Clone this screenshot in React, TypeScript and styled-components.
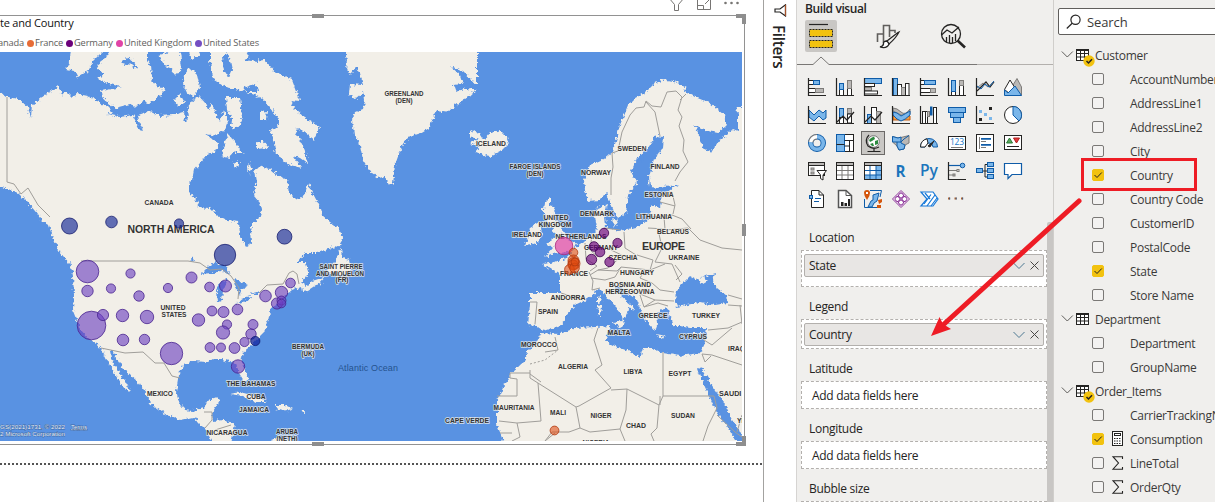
import React from 'react';
import styled, { createGlobalStyle } from 'styled-components';

const Global = createGlobalStyle`
  * { box-sizing: border-box; }
  body { margin: 0; background: #fff; overflow: hidden; font-family: "Open Sans", "Noto Sans", sans-serif; font-size: 12px; color: #252423; }
`;

const Page = styled.div`
  position: relative;
  display: flex;
  width: 1215px;
  height: 502px;
  overflow: hidden;
`;

/* ---------- report canvas ---------- */
const Canvas = styled.main`
  flex: none;
  display: flex;
  flex-direction: column;
  width: 764px;
  height: 502px;
  border-right: 1px solid #a3a2a0;
  background: #fff;
`;
const VisualHeader = styled.div`
  display: flex;
  justify-content: flex-end;
  height: 15px;
  padding-right: 20px;
  overflow: hidden;
`;
const VisualFrame = styled.section`
  position: relative;
  width: 745px;
  height: 430px;
  border: 1px solid #929292;
  border-left: 0;
`;
const VisualTitle = styled.div`
  height: 20px;
  font-size: 11px;
  line-height: 13px;
  letter-spacing: -0.2px;
  color: #111;
  white-space: nowrap;
`;
const LegendRow = styled.div`
  display: flex;
  align-items: center;
  height: 16px;
  margin-left: -2px;
  padding-bottom: 2px;
  font-size: 9.3px;
  line-height: 14px;
  color: #605e5c;
  white-space: nowrap;
`;
const LegendItem = styled.span<{ $w: number }>`
  display: flex;
  align-items: center;
  gap: 1px;
  width: ${p => p.$w}px;
  letter-spacing: -0.16px;
`;
const Dot = styled.i<{ $c: string }>`
  flex: none;
  width: 7px;
  height: 7px;
  border-radius: 50%;
  background: ${p => p.$c};
`;
const Handle = styled.i<{ $x: number; $y: number; $w: number; $h: number }>`
  position: absolute;
  left: ${p => p.$x}px;
  top: ${p => p.$y}px;
  width: ${p => p.$w}px;
  height: ${p => p.$h}px;
  background: #8e8e8e;
`;
const PageEdge = styled.div`
  width: 762px;
  height: 2px;
  margin-top: 18px;
  background: repeating-linear-gradient(90deg, #555 0 2px, #fff 2px 4px);
`;
const MapSvg = styled.svg`
  display: block;
  width: 742px;
  height: 389px;
`;

/* ---------- filters strip ---------- */
const FiltersStrip = styled.aside`
  flex: none;
  display: flex;
  flex-direction: column;
  align-items: center;
  width: 33px;
  padding-top: 4px;
  background: #fff;
  border-right: 1px solid #d6d4d2;
`;
const VerticalTitle = styled.span`
  writing-mode: vertical-rl;
  margin-top: 8px;
  margin-right: 2px;
  font-size: 15.3px;
  font-weight: 600;
  line-height: 18px;
  letter-spacing: -0.3px;
`;

/* ---------- build pane ---------- */
const BuildPane = styled.aside`
  flex: none;
  width: 256px;
  height: 502px;
  background: #f0efed;
  display: flex;
  flex-direction: column;
`;
const PaneTitle = styled.h2`
  margin: 0;
  height: 20px;
  padding-left: 8px;
  font-size: 12px;
  font-weight: 600;
  line-height: 18px;
  letter-spacing: -0.4px;
`;
const Tabs = styled.div`
  display: flex;
  gap: 34px;
  height: 32px;
  padding-left: 8px;
`;
const Tab = styled.div<{ $on?: boolean }>`
  width: 32px;
  height: 32px;
  border-radius: 2px;
  background: ${p => (p.$on ? '#c9c7c4' : 'transparent')};
`;
const TabLine = styled.svg`
  display: block;
  width: 256px;
  height: 17px;
`;
const Gallery = styled.div`
  display: grid;
  grid-template-columns: repeat(8, 24px);
  grid-auto-rows: 24px;
  gap: 4px;
  padding: 6px 0 0 8px;
  height: 147px;
`;
const Cell = styled.div<{ $on?: boolean }>`
  width: 24px;
  height: 24px;
  background: ${p => (p.$on ? '#c9c7c4' : 'transparent')};
  box-shadow: ${p => (p.$on ? 'inset 0 0 0 1px #6b6967' : 'none')};
  svg { display: block; }
`;
const WellsArea = styled.div`
  display: flex;
  flex: 1;
  justify-content: space-between;
  padding-top: 6px;
  overflow: hidden;
`;
const Wells = styled.div`
  width: 250px;
`;
const Scrollbar = styled.div`
  width: 6px;
  background: #c8c6c4;
  border-radius: 2px 2px 0 0;
`;
const WellLabel = styled.div<{ $h: number }>`
  height: ${p => p.$h}px;
  padding: 0 0 3px 12px;
  display: flex;
  align-items: flex-end;
  line-height: 18px;
  letter-spacing: -0.3px;
`;
const WellBox = styled.div<{ $h: number }>`
  height: ${p => p.$h}px;
  width: 246px;
  margin-left: 4px;
  padding: 3px 2px;
  border: 1px dashed #b3b0ad;
  background: #fff;
`;
const Placeholder = styled.div`
  padding-left: 8px;
  line-height: 22px;
  letter-spacing: -0.3px;
`;
const Pill = styled.div`
  display: flex;
  align-items: center;
  height: 23px;
  padding: 0 4px;
  border: 1px solid #b3b0ad;
  border-radius: 2px;
  background: #e8e6e4;
  letter-spacing: -0.3px;
  svg { margin-left: auto; }
`;

/* ---------- fields pane ---------- */
const FieldsPane = styled.aside`
  flex: none;
  width: 162px;
  height: 502px;
  padding-top: 8px;
  border-left: 1px solid #d0cecb;
  background: #f0efed;
  overflow: hidden;
`;
const SearchBox = styled.div`
  display: flex;
  align-items: center;
  gap: 5px;
  width: 170px;
  height: 27px;
  margin-left: 4px;
  padding-left: 7px;
  border: 1px solid #605e5c;
  border-radius: 2px;
  background: #fff;
  font-size: 13px;
  letter-spacing: -0.1px;
  color: #3b3a39;
`;
const Tree = styled.div`
  display: flex;
  flex-direction: column;
  padding-top: 8px;
`;
const TableRow = styled.div`
  display: flex;
  align-items: center;
  height: 24px;
  padding-left: 7px;
  color: #3b3a39;
  letter-spacing: -0.3px;
  white-space: nowrap;
`;
const FieldRow = styled.div`
  display: flex;
  align-items: center;
  height: 24px;
  padding-left: 38px;
  color: #3b3a39;
  letter-spacing: -0.28px;
  white-space: nowrap;
`;
const Check = styled.span<{ $on?: boolean }>`
  flex: none;
  display: flex;
  width: 12px;
  height: 12px;
  border: 1px solid ${p => (p.$on ? '#f2c20f' : '#7a7876')};
  border-radius: 2px;
  background: ${p => (p.$on ? '#f2c20f' : '#f3f2f1')};
`;
const IconSlot = styled.span`
  flex: none;
  display: flex;
  width: 26px;
  padding-left: 7px;
`;

const Overlay = styled.svg`
  position: absolute;
  inset: 0;
  pointer-events: none;
`;

/* ---------- map data ---------- */
const LAND: string[] = [
  // North America
  '-6,92 0,92 7,97 18,99 28,107 31,118 32,105 45,95 52,91 58,86 63,97 66,91 72,97 78,94 88,96 100,102 108,107 113,112 107,114 120,117 133,115 135,118 137,125 141,131 138,115 147,112 153,113 160,116 173,115 184,112 185,121 188,118 187,108 193,100 199,96 206,104 209,111 212,103 215,112 220,122 224,110 228,120 224,130 219,133 213,137 206,134 213,140 219,143 215,152 207,154 200,163 194,170 192,180 189,183 189,193 195,198 199,207 210,208 218,216 228,221 239,222 240,236 246,247 252,243 251,230 253,223 259,219 262,210 260,203 254,196 255,188 257,182 255,170 262,166 270,169 277,175 287,179 289,193 296,200 304,196 308,184 312,192 318,203 322,215 330,222 337,227 343,236 340,246 328,249 318,253 305,253 297,262 306,262 308,274 301,282 307,286 312,281 325,277 320,283 308,291 303,292 302,286 292,290 285,296 280,303 271,308 268,322 264,332 258,338 252,345 243,352 241,362 246,372 248,380 244,382 239,374 236,364 229,361 222,359 213,359 208,362 192,361 183,366 179,374 176,392 179,402 185,410 193,411 203,408 208,400 217,397 220,400 215,408 212,413 213,421 224,420 235,424 233,434 231,446 214,446 206,430 199,423 194,417 180,420 165,414 150,403 147,394 138,382 124,370 118,360 113,352 110,352 112,361 118,370 124,380 130,391 123,387 114,373 108,362 102,350 96,343 88,338 80,329 77,320 73,310 74,295 73,275 70,261 59,250 54,240 49,225 42,221 36,212 27,202 18,193 8,189 -6,185',
  '71,48 70,60 66,69 75,71 78,77 88,71 92,62 101,53 109,48',
  '110,48 106,58 97,65 99,70 104,74 97,79 110,84 122,87 101,91 102,97 115,108 130,104 137,107 143,101 150,104 157,98 165,90 157,86 152,80 151,65 147,60 147,48',
  '158,55 166,53 174,48 180,52 182,68 176,76 170,68 165,66',
  '184,75 190,68 197,75 200,88 193,97 187,93 183,84',
  '174,100 180,94 185,103 178,107',
  '188,48 192,60 200,54 197,48',
  '210,48 210,60 212,78 226,87 240,90 255,95 262,98 270,107 278,118 279,126 270,130 274,143 276,154 290,165 302,168 293,156 300,158 307,163 304,147 295,130 300,129 308,135 313,140 320,127 305,118 294,108 290,100 300,101 292,80 275,72 265,60 252,61 245,48',
  '226,97 240,97 242,115 240,125 231,130 232,119 227,110',
  '225,142 228,134 235,142 240,150 246,155 232,152 229,158 221,156',
  '233,163 239,161 237,168', '247,163 252,165 249,175', '256,143 262,140 269,148 258,149', '260,112 267,111 266,120 260,120',
  // Newfoundland
  '326,272 335,262 341,247 342,258 350,260 352,270 345,275',
  // Vancouver Island
  '58,250 66,254 75,263 70,264',
  // Greenland
  '345,48 347,60 346,70 351,75 355,68 360,72 363,85 350,84 349,94 356,99 364,92 365,100 363,109 355,112 352,120 354,135 360,145 363,160 372,174 378,178 385,177 390,186 393,183 395,165 401,148 408,137 420,133 430,127 436,110 448,112 455,106 468,97 477,90 470,88 455,91 453,85 463,84 460,75 450,66 463,72 472,80 477,86 477,48',
  // Iceland
  '470,132 474,130 480,134 484,140 490,133 500,130 507,137 509,143 500,152 490,157 480,154 475,152 480,146 470,144 478,140 470,136',
  // Britain and Ireland
  '544,203 550,197 550,206 556,208 552,217 560,226 564,234 568,240 576,243 572,251 560,253 552,254 545,257 553,248 547,243 556,236 552,228 548,224 545,215 543,210',
  '530,228 540,222 542,235 537,243 525,245 528,236',
  // Eurasia and Africa
  '588,201 585,190 584,180 590,165 605,158 613,152 620,125 628,105 635,98 645,93 653,85 663,79 673,81 686,87 684,91 695,97 710,103 724,114 726,126 718,133 708,131 697,127 694,124 700,137 703,148 712,152 719,140 722,138 733,129 738,131 738,113 735,107 748,107 748,446 507,446 502,437 497,425 497,400 505,384 512,372 525,361 527,352 535,344 541,333 560,334 575,328 595,327 610,326 608,334 605,341 615,346 628,351 640,358 643,348 652,348 663,353 680,356 700,353 705,342 707,328 690,328 680,326 673,326 670,318 668,308 657,312 658,323 655,332 647,322 642,312 637,300 623,290 615,284 615,291 632,305 636,310 628,308 627,313 623,322 621,313 610,300 600,289 587,299 575,305 565,316 562,325 543,331 537,326 528,325 530,305 530,293 560,293 560,275 549,268 543,264 555,262 567,257 575,248 583,243 590,236 597,229 595,215 597,208 607,204 605,215 606,228 620,231 640,226 652,215 650,205 660,208 662,195 680,184 660,188 650,187 649,177 654,160 663,147 664,137 656,136 648,148 637,158 631,172 637,182 628,195 626,213 618,219 611,205 607,193 600,200',
  '598,297 602,296 601,303 598,304', '598,306 602,305 601,316 597,315', '611,322 624,321 622,328', '612,219 619,221 615,228', '655,334 666,336 662,338', '693,333 704,333 697,336',
  // Caribbean and South America
  '230,394 240,392 255,396 268,402 255,402 243,396', '275,405 285,405 293,409 283,411 276,409', '253,410 262,409 262,411', '298,410 304,410 304,412', '265,446 271,440 280,437 290,440 300,446',
];

const WATER: string[] = [
  // Great Lakes
  '200,275 208,267 215,262 226,266 231,275 219,271 212,274', '217,302 216,290 221,282 229,277 223,290 222,301', '233,278 240,281 249,285 242,289 240,295 236,288', '235,304 246,297 253,296 246,301', '250,294 260,291 259,294',
  // Black Sea and Azov
  '675,302 676,291 682,284 690,276 697,280 702,284 707,281 702,277 715,273 713,281 717,288 727,296 728,303 715,305 700,302 687,305 677,307',
  // Red Sea
  '697,368 702,369 713,387 724,403 732,420 743,436 743,446 736,440 722,420 712,403 705,387',
  // Arctic inlets
  '121,63 127,57 134,62 138,70 132,65', '205,134 219,141 217,136', '133,117 140,130 143,131 137,117', '640,155 646,152 642,164',
  '222,58 228,52 232,70 229,78 224,70', '245,60 252,52 262,54 258,62', '243,88 256,83 258,92 247,92', '190,260 192,256 194,261',
];

const BORDERS: string[] = [
  'M7 97V182L14 184 21 194 28 188 38 205 50 217',
  'M81 261H188L200 263 210 270 222 269 231 276 239 288 238 299', 'M259 293 267 285 283 284 289 273 293 271 297 274 299 284',
  'M101 348 125 353 143 352 155 363 164 363 172 376 180 378',
  'M204 412H212V420L205 428', 'M215 430 231 425',
  'M611 195V178L613 167 612 153 618 151 622 132 630 115 636 108 644 107 646 101 652 106 661 107 667 92 676 91 682 97 678 110 682 117 679 126 684 140 683 151 688 162 680 172 675 181', 'M646 102 655 112 660 136', 'M686 94 680 100',
  'M661 193 672 192 675 205 673 214M660 202 675 206M648 217 665 216 672 215 682 219 691 229M648 228 665 229 664 217',
  'M592 235 590 250 598 257M585 243 586 259 597 266 590 271M604 228 620 230M624 232 625 248 636 255 628 258 611 250M622 256 608 268 598 270 590 275M598 270 617 271 621 267 650 270 653 260 637 255M658 229 662 248 655 262 672 264 680 282M621 267 615 277 605 280 591 278M645 270 640 278 652 283 660 290 674 292M650 270 665 264M633 285 640 294 655 300 674 301M640 295 644 307 655 300',
  'M675 265 682 274 676 280M666 230 688 228 700 240 722 248 742 250',
  'M530 302 537 302 535 324M561 293 583 300M589 272 593 281 592 290 600 288M644 307 658 303 668 306',
  'M728 295 742 299M728 305 742 306M740 305 742 324M708 330 728 328 742 322M704 340 712 345 732 328M702 354 712 355 742 365M702 354 705 362 711 356',
  'M555 337 558 350 545 352M530 370V378L576 407 579 406 611 388 595 370 602 365 594 340 598 328M530 373H510V378L517 379V396H497',
  'M663 352V396H700M663 396 659 405V405L627 389 611 390M627 389 626 410 620 429M659 405 657 428 651 434 654 441M576 407 580 428 569 432 552 432 545 441M538 383 541 421 517 423M541 382 530 374M517 423 499 421M517 423 520 437 512 441M580 428 590 432 620 429 625 441M700 396 714 396M714 396 717 408 708 426 703 441M717 415 735 432 742 437',
  'M660 396V405M737 432 742 415M545 441 555 433M500 433H512',
];

type MapLabel = [string, number, number, number];
const LABELS: MapLabel[] = [
  ['CANADA', 159, 205, 29], ['GREENLAND', 404, 96, 39], ['(DEN)', 404, 103, 17], ['ICELAND', 491, 146, 30],
  ['SWEDEN', 632, 151, 29], ['FINLAND', 665, 169, 29], ['NORWAY', 596, 175, 30], ['FAROE ISLANDS', 535, 169, 51], ['(DEN)', 535, 176, 17],
  ['ESTONIA', 659, 197, 29], ['DENMARK', 597, 216, 34], ['LITHUANIA', 654, 219, 36], ['UNITED', 556, 220, 25], ['KINGDOM', 555, 227, 33],
  ['BELARUS', 673, 234, 32], ['IRELAND', 527, 237, 30], ['NETHERLANDS', 581, 239, 51], ['GERMANY', 601, 250, 34], ['CZECHIA', 623, 260, 29],
  ['UKRAINE', 684, 260, 31], ['HUNGARY', 637, 275, 34], ['FRANCE', 574, 276, 28], ['BOSNIA AND', 630, 287, 42], ['HERZEGOVINA', 630, 294, 49],
  ['ANDORRA', 568, 300, 35], ['SPAIN', 548, 314, 20], ['GREECE', 653, 318, 29], ['TURKEY', 706, 318, 28], ['MALTA', 619, 335, 23],
  ['CYPRUS', 693, 339, 28], ['MOROCCO', 539, 347, 36], ['ALGERIA', 573, 369, 30], ['LIBYA', 633, 374, 19], ['EGYPT', 680, 376, 23],
  ['MAURITANIA', 514, 410, 41], ['MALI', 558, 415, 16], ['NIGER', 601, 418, 21], ['CHAD', 636, 428, 20], ['SUDAN', 683, 418, 24],
  ['NIGERIA', 596, 445, 27], ['UNITED', 173, 310, 25], ['STATES', 174, 317, 25], ['MEXICO', 160, 396, 26],
  ['THE BAHAMAS', 251, 386, 49], ['CUBA', 256, 399, 19], ['JAMAICA', 254, 412, 30], ['NICARAGUA', 227, 435, 41],
  ['ARUBA', 287, 434, 22], ['(NETH)', 287, 440.5, 21], ['BERMUDA', 308, 349, 32], ['(UK)', 308, 355.5, 13],
  ['SAINT PIERRE', 341, 269, 43], ['AND MIQUELON', 340, 275.5, 48], ['(FR)', 342, 282, 13], ['CAPE VERDE', 467, 423, 44],
];
const CUT_LABELS: MapLabel[] = [['IRAQ', 728, 351, 17], ['SAUDI ARABIA', 719, 396, 52], ['YEMEN', 737, 423, 24]];

type Bubble = [number, number, number];
const US: Bubble[] = [
  [87.5, 271.5, 11.3], [87.5, 291, 5.7], [111, 288.5, 4.6], [130.5, 273.5, 4.6], [139, 296, 5.2], [168, 288, 4.6], [191.5, 277.5, 5.5],
  [209.5, 287, 4.8], [225.5, 286, 6], [91.5, 325.5, 14.3], [103, 315, 5.6], [122.5, 315.5, 6.2], [147, 317, 6.7], [123, 340, 5.8], [144.5, 339.5, 5.2],
  [171.5, 353.5, 11.2], [198.5, 320, 6.2], [212, 311, 4.9], [223.5, 312, 5.5], [237.5, 309.5, 5.3], [227, 324.5, 4.6], [223, 332.5, 6.6],
  [210, 347.5, 4.9], [221, 347.5, 4.5], [234.5, 348, 5.4], [244.5, 342, 4.6], [251, 334, 5.2], [253, 324.5, 5], [238, 366.5, 6.7],
  [265.5, 296, 5.8], [281.5, 292.5, 6.2], [277, 303.5, 5.6], [281.5, 300.5, 4.5], [281.5, 303.5, 4.3], [290.5, 283, 4.8],
];
const CA: Bubble[] = [[69.5, 226, 8], [111.5, 222, 5.8], [179, 223.5, 4.6], [225, 255, 10.7], [284.5, 236.7, 7.4]];
const DE: Bubble[] = [[604, 233, 4.7], [617.5, 243, 4.6], [594, 246.5, 4.8], [600, 252, 4.8], [591.5, 259.5, 5.2], [609.5, 262, 4.7]];
const FR: Bubble[] = [[573.5, 252.5, 4.3], [573.5, 260.5, 5.5], [574, 263.5, 6], [573, 265, 5], [569.5, 269.5, 4.9], [574.5, 268, 4.8], [575, 262, 4], [554.5, 430.5, 4.4]];

const Bubbles = ({ items, fill, stroke, o = 0.62 }: { items: Bubble[]; fill: string; stroke: string; o?: number }) => (
  <g fill={fill} fillOpacity={o} stroke={stroke} strokeOpacity=".8" strokeWidth="1">
    {items.map(([x, y, r], i) => <circle key={i} cx={x} cy={y} r={r} />)}
  </g>
);

const labelProps = {
  fontFamily: '"Liberation Sans", sans-serif', fill: '#333', stroke: '#f4f2ec', strokeOpacity: 0.7, strokeWidth: 1.8,
  paintOrder: 'stroke' as const, strokeLinejoin: 'round' as const,
};

const WorldMap = () => (
  <MapSvg viewBox="0 52 742 389">
    <defs>
      <filter id="coast" x="-10" y="40" width="770" height="410" filterUnits="userSpaceOnUse" colorInterpolationFilters="sRGB">
        <feTurbulence type="fractalNoise" baseFrequency="0.3" numOctaves="2" seed="4" />
        <feDisplacementMap in="SourceGraphic" scale="6" xChannelSelector="R" yChannelSelector="G" />
      </filter>
    </defs>
    <rect x="0" y="52" width="742" height="389" fill="#5992e2" />
    <g filter="url(#coast)">
      <g fill="#f2efe8">{LAND.map((p, i) => <polygon key={i} points={p} />)}</g>
      <g fill="#5992e2">{WATER.map((p, i) => <polygon key={i} points={p} />)}</g>
    </g>
    <g fill="none" stroke="#a09e9a" strokeWidth="1" strokeLinejoin="round">
      {BORDERS.map((d, i) => <path key={i} d={d} />)}
      <path d="M530 364 545 360 558 350" strokeDasharray="2 2" />
    </g>
    <g {...labelProps} fontSize="7" fontWeight="700" textAnchor="middle">
      {LABELS.map(([t, x, y, w], i) => <text key={i} x={x} y={y} textLength={w} lengthAdjust="spacingAndGlyphs">{t}</text>)}
      <g textAnchor="start">
        {CUT_LABELS.map(([t, x, y, w], i) => <text key={i} x={x} y={y} textLength={w} lengthAdjust="spacingAndGlyphs">{t}</text>)}
      </g>
      <text x="171" y="233" fontSize="10.5" fontWeight="700" textLength="87">NORTH AMERICA</text>
      <text x="663.500" y="250" fontSize="11" fontWeight="700" textLength="43">EUROPE</text>
    </g>
    <text x="338" y="371" fontFamily="Liberation Sans, sans-serif" fontSize="9" fill="#25528f" textLength="60">Atlantic Ocean</text>
    <g fontFamily="Liberation Sans, sans-serif" fontSize="6" fill="#eaf1fb" stroke="#2d4a75" strokeWidth=".8" strokeOpacity=".6" paintOrder="stroke">
      <text x="0" y="428.500" textLength="65" lengthAdjust="spacingAndGlyphs">GS(2021)1731, © 2022</text>
      <text x="0" y="435.500" textLength="65" lengthAdjust="spacingAndGlyphs">2 Microsoft Corporation</text>
      <text x="71" y="428.500" textLength="16" textDecoration="underline">Terms</text>
    </g>
    <Bubbles items={US} fill="#6b3fc0" stroke="#4a2590" />
    <Bubbles items={CA} fill="#1c2f9a" stroke="#1a2070" o={0.68} />
    <Bubbles items={[[255.3, 341, 4.6]]} fill="#12239e" stroke="#101d70" o={0.75} />
    <Bubbles items={DE} fill="#6b007b" stroke="#3d0050" o={0.66} />
    <Bubbles items={[[564, 246, 8.8]]} fill="#e044a7" stroke="#a82c7c" o={0.7} />
    <Bubbles items={FR} fill="#e04a10" stroke="#b03a10" o={0.58} />
  </MapSvg>
);

/* ---------- gallery icons, 18×18 drawings centred in 24px cells ---------- */
const K = '#252423', B = '#7ab6ea', BS = '#0f5ca8', G = '#bab8b6', GS = '#7d7b79';
const bl = { fill: B, stroke: BS }, gr = { fill: G, stroke: GS }, wh = { fill: '#fff', stroke: K };
const Axis = () => <path d="M.5 0V17.500H18" stroke={K} fill="none" strokeWidth="1.200" />;
const R = ({ a, s }: { a: [number, number, number, number]; s: { fill: string; stroke: string } }) => (
  <rect x={a[0]} y={a[1]} width={a[2]} height={a[3]} {...s} />
);

const ICONS: React.ReactNode[] = [
  <><R a={[.5, 2.5, 5, 4]} s={wh} /><R a={[5.5, 2.5, 6, 4]} s={bl} /><R a={[.5, 10.5, 7, 4]} s={wh} /><R a={[7.5, 10.5, 8, 4]} s={gr} /><Axis /></>,
  <><R a={[3.5, 10.5, 4, 7]} s={wh} /><R a={[3.5, 5.5, 4, 6]} s={bl} /><R a={[11.5, 9.5, 4, 8]} s={wh} /><R a={[11.5, 2.5, 4, 8]} s={gr} /><Axis /></>,
  <><R a={[.5, .5, 17, 5]} s={bl} /><R a={[.5, 5.5, 10, 3]} s={wh} /><R a={[.5, 9.5, 7, 3]} s={gr} /><R a={[.5, 13, 13, 3]} s={wh} /><Axis /></>,
  <><R a={[1.5, .5, 4, 17]} s={bl} /><R a={[5.500, 6.5, 4, 11]} s={wh} /><R a={[9.500, 9.500, 4, 8]} s={gr} /><R a={[13.500, 5.500, 3.500, 12]} s={wh} /><Axis /></>,
  <><R a={[.5, 2.5, 4, 4]} s={wh} /><R a={[4.5, 2.5, 11, 4]} s={bl} /><R a={[.5, 10.5, 10, 4]} s={wh} /><R a={[10.5, 10.5, 5, 4]} s={gr} /><Axis /></>,
  <><R a={[3.5, 13.5, 4, 4]} s={wh} /><R a={[3.5, 2.5, 4, 11]} s={bl} /><R a={[11.5, 7.5, 4, 10]} s={wh} /><R a={[11.5, 2.5, 4, 5]} s={gr} /><Axis /></>,
  <g fill="none"><path d="M1 13 6 8 10 4 14 9 18 4" stroke={K} strokeWidth="1.200" /><path d="M1 10 7 5 12 9 17.500 4" stroke={GS} /><path d="M1 8 5 11 9 6 13 9 18 3" stroke={BS} /><Axis /></g>,
  <><path d="M9 7 13 .5 17.500 9V17H9Z" {...gr} /><path d="M.5 11.500 6 2 11 10 6 16Z" {...wh} /><path d="M.5 17.500V12L4 15 11 8 17.500 17.500Z" {...bl} /></>,
  <><path d="M1 4 6 9 11 4 15 7 18 4V12L15 14 11 10 6 15 1 11Z" {...bl} /><Axis /></>,
  <><R a={[3.5, 2.5, 4, 9]} s={bl} /><R a={[3.5, 11.500, 4, 6]} s={wh} /><R a={[11.5, 2.500, 4, 5]} s={gr} /><R a={[11.500, 8, 4, 9]} s={wh} /><path d="M1 16 7 10 11 14 18 6" fill="none" stroke={K} strokeWidth="1.200" /><Axis /></>,
  <><R a={[3.5, 8.5, 4, 9]} s={bl} /><R a={[7.5, 1.500, 5, 16]} s={wh} /><R a={[12.5, 5.500, 4, 12]} s={gr} /><path d="M1 16 7 10 11 14 18 6" fill="none" stroke={K} strokeWidth="1.200" /><Axis /></>,
  <><path d="M1 2Q5 2 9 6T18 3V8Q13 11 9 9T1 5Z" {...gr} /><path d="M1 10H5L9 14 13 10H18V14H1Z" fill="#f09a3e" stroke="#c05a10" /><path d="M1 6Q5 6 9 10 13 8 18 5V9Q13 14 9 15 5 14 1 9Z" {...bl} /><Axis /></>,
  <><R a={[2.5, 5.500, 3, 12]} s={wh} /><R a={[5.500, 5.500, 2, 12]} s={wh} /><R a={[7.500, 5.500, 2, 5]} s={gr} /><R a={[10.500, 1, 1.500, 8]} s={{ fill: BS, stroke: BS }} /><R a={[13.500, 1.500, 3, 16]} s={wh} /><Axis /></>,
  <><R a={[.5, 1.5, 17, 5]} s={bl} /><R a={[2.5, 6.5, 13, 5]} s={bl} /><R a={[5.5, 11.5, 7, 5]} s={bl} /></>,
  <><g fill={B}><rect x="3" y="4" width="3" height="3" /><rect x="8" y="7" width="3" height="3" /><rect x="13" y="11" width="3" height="3" /></g><path d="M13 1h3v3h-3zM3 12h3v3h-3z" fill={K} /><Axis /></>,
  <><circle cx="9" cy="9" r="8.500" {...wh} /><path d="M9 .5A8.500 8.500 0 0 1 15 15L9 9Z" {...bl} /></>,
  <><circle cx="9" cy="9" r="6.300" fill="none" stroke={BS} strokeWidth="5.400" /><circle cx="9" cy="9" r="6.300" fill="none" stroke={B} strokeWidth="3.600" /><path d="M2.700 8A6.300 6.300 0 0 1 9 2.700" fill="none" stroke={GS} strokeWidth="5.400" /><path d="M2.700 8A6.300 6.300 0 0 1 9 2.700" fill="none" stroke="#fff" strokeWidth="3.400" /></>,
  <><R a={[.5, .5, 17, 17]} s={wh} /><R a={[.5, .5, 8, 17]} s={bl} /><path d="M.5 10.500H8.500M8.500 6.500H17.500M13.500 6.500V17.500M8.500 12H13.500" stroke={K} /></>,
  <><circle cx="9.500" cy="7.500" r="5.800" fill="#fff" stroke="#777" /><path d="M7 4 10 2.500 11 5 8 7 6 8 5 6ZM11 7 14 6 14 10 11 11ZM6 10 9 9 10 12 8 12Z" fill="#2b8a3e" /><path d="M5 1Q0 6 4 12 9 16 15 13M10 14V17M3.500 17.500H16.500" fill="none" stroke={K} strokeWidth="1.200" /></>,
  <><path d="M.5 2.500 6 4 11 3 17 1.500V9L13 11 12 15 7 16 5 12 .5 8Z" fill={G} stroke={GS} /><path d="M.5 2.500 6 4 9 3 9 9 13 11 12 15 7 16 5 12V8H.5Z" fill={B} stroke={BS} /><path d="M5 8H9L12 5 17 1.500" fill="none" stroke={BS} /></>,
  <><path d="M.5 13A8.500 8.500 0 0 1 17.500 13H13A4 4 0 0 0 5 13Z" {...bl} /><path d="M.5 13A8.500 8.500 0 0 1 7 4.800L8 9 5 13Z" {...wh} /><path d="M8 12 14 7 10 13Z" fill={K} stroke={K} /></>,
  <><R a={[.5, 2.5, 17, 13]} s={wh} /><text x="2" y="11" fontSize="8.500" fill="#1a78c8" textLength="14" fontFamily="Open Sans, sans-serif">123</text><path d="M3 13.500H15" stroke={GS} /></>,
  <><R a={[.5, .5, 17, 17]} s={wh} /><path d="M3.500 3V15" stroke={GS} /><path d="M5 4.800H15M5 10.800H15" stroke={BS} strokeWidth="1.800" /><path d="M5 7.500H10M5 13.500H10" stroke={GS} /></>,
  <><R a={[.5, 1.5, 17, 14]} s={wh} /><path d="M2.500 9 5.500 4 8.500 9Z" fill="#5aa75a" stroke="#2b7a3b" /><path d="M9.500 4H15.500L12.500 9Z" fill="#e03a3a" stroke="#b02020" /><path d="M3 12.500H15" stroke={K} /></>,
  <><R a={[.5, .5, 16, 13]} s={wh} /><R a={[.5, .5, 16, 3]} s={{ fill: G, stroke: K }} /><R a={[3, 6, 3, 2]} s={gr} /><R a={[3, 10, 3, 2]} s={gr} /><path d="M9 8.500H18.500L15 13V18L12.500 16.500V13Z" {...wh} /></>,
  <><R a={[.5, .5, 17, 17]} s={wh} /><R a={[.5, .5, 17, 3]} s={{ fill: G, stroke: K }} /><path d="M.5 8.500H17.500M.5 13H17.500M6 4V17M12 4V17" stroke={GS} /><rect x=".5" y=".5" width="17" height="17" fill="none" stroke={K} /></>,
  <><R a={[.5, .5, 17, 17]} s={wh} /><R a={[.5, .5, 17, 3]} s={{ fill: G, stroke: K }} /><path d="M12 4H17.500V17.500H.5V13H12Z" fill={B} /><path d="M.5 8.500H17.500M.5 13H17.500M6 4V17M12 4V17" stroke={BS} /><rect x=".5" y=".5" width="17" height="17" fill="none" stroke={K} /></>,
  <text x="3.500" y="15" fontSize="16" fontWeight="700" fill="#1c75bc" fontFamily="Open Sans, sans-serif" textLength="10" lengthAdjust="spacingAndGlyphs">R</text>,
  <text x="0" y="13.500" fontSize="16" fontWeight="600" fill="#1c75bc" fontFamily="Open Sans, sans-serif" textLength="18" lengthAdjust="spacingAndGlyphs">Py</text>,
  <><path d="M1 3.500H13" stroke={BS} strokeWidth="1.200" /><circle cx="14.500" cy="3.500" r="2.300" {...bl} /><path d="M1 8.500H9M1 13H5" stroke={GS} /><R a={[9, 7.500, 2, 2]} s={gr} /><R a={[5, 12, 2, 2]} s={gr} /><Axis /></>,
  <><path d="M6 9H11M11 2.500H9V15H11" fill="none" stroke={K} /><R a={[.5, 6.500, 6, 4]} s={bl} /><R a={[11.500, .5, 6, 4]} s={bl} /><R a={[11.500, 6.500, 6, 4]} s={bl} /><R a={[11.500, 12.500, 6, 4]} s={bl} /></>,
  <path d="M.5 1.500H17.500V12.500H8L4 16.500V12.500H.5Z" fill="#fff" stroke={BS} strokeWidth="1.200" />,
  <><path d="M3.500 .500H11L15.500 5V17.500H3.500Z" {...wh} /><path d="M11 .5V5H15.500" fill="none" stroke={K} /><path d="M7 8.500H13M6 11.500H11" stroke={BS} /><rect x="1.500" y="5.500" width="3" height="3" {...bl} /></>,
  <><path d="M2.500 .5H10L15.500 5.500V17.500H2.500Z" fill="#fff" stroke="#555" strokeWidth="1.500" /><path d="M10 .5V5.500H15" fill="none" stroke="#555" /><path d="M5 12h2.500v4H5zM8.500 13h2.500v3H8.500zM12 9h2v7h-2z" fill={K} /></>,
  <><path d="M6 .5H17.500L16 7M.5 9V17.500H14" fill="none" stroke={BS} /><path d="M9 5 15 3 13 11 10 13 8 17H4L7 11 9 10Z" {...bl} /><path d="M0 3A3 3 0 0 1 6 3Q6 6 3 10 0 6 0 3Z" fill="#d4560c" /><rect x="2" y="2" width="2" height="2" fill="#fff" /><path d="M14 10 18 9 18 12 15 14ZM13 15h4v3h-4z" fill="#d4560c" /></>,
  <g fill="#fff" stroke="#8a2f96" strokeWidth="1"><path d="M9 .5 17.500 9 9 17.500 .5 9Z" /><rect x="-2.200" y="-2.200" width="4.400" height="4.400" rx="1.400" transform="translate(9 5.500) rotate(45)" /><rect x="-2.200" y="-2.200" width="4.400" height="4.400" rx="1.400" transform="translate(5.500 9) rotate(45)" /><rect x="-2.200" y="-2.200" width="4.400" height="4.400" rx="1.400" transform="translate(12.500 9) rotate(45)" /><rect x="-2.200" y="-2.200" width="4.400" height="4.400" rx="1.400" transform="translate(9 12.500) rotate(45)" /></g>,
  <g fill="#fff" stroke="#1678d8" strokeWidth="1.200"><path d="M1 2H13L18 9 13 16H1L7 9Z" /><path d="M4 14 11 4.500M7 16 15 5M10 9 5 3M11 16 17 8" fill="none" /></g>,
  <g><path d="M0 7.500h2v2H0zM6.500 7.500h2v2h-2zM13 7.500h2v2h-2z" fill="#b0632c" /><path d="M1.200 7.500h1v2h-1zM7.700 7.500h1v2h-1zM14.200 7.500h1v2h-1z" fill="#3a5d8c" /></g>,
];

const PillActions = () => (
  <svg width="26" height="11" viewBox="0 0 26 11" fill="none" stroke="#484644" strokeWidth="1">
    <path d="M.5 3 6 8.500 11.500 3" stroke="#4d7892" /><path d="M17.500 1.500 25.500 9.500M25.500 1.500 17.500 9.500" />
  </svg>
);

const TableIcon = ({ badge }: { badge?: boolean }) => (
  <svg width="34" height="24" viewBox="0 0 34 24" fill="none">
    <path d="M.8 8.500 6.300 14 11.800 8.500" stroke="#605e5c" />
    <rect x="15.500" y="6.500" width="12" height="11" fill="#fff" stroke={K} />
    <path d="M15 7.500H28M15 10.500H28M15 14H28M19.500 8V18M23.500 8V18" stroke={K} />
    {badge && <><circle cx="28" cy="18" r="5.700" fill="#f2c20f" /><path d="M25.500 18 27.500 20 31 16.300" stroke={K} strokeWidth="1.500" /></>}
  </svg>
);

type Field = { name: string; on?: boolean; icon?: 'calc' | 'sum' };
const TABLES: { name: string; badge?: boolean; fields: Field[] }[] = [
  { name: 'Customer', badge: true, fields: [{ name: 'AccountNumber' }, { name: 'AddressLine1' }, { name: 'AddressLine2' }, { name: 'City' }, { name: 'Country', on: true }, { name: 'Country Code' }, { name: 'CustomerID' }, { name: 'PostalCode' }, { name: 'State', on: true }, { name: 'Store Name' }] },
  { name: 'Department', fields: [{ name: 'Department' }, { name: 'GroupName' }] },
  { name: 'Order_Items', badge: true, fields: [{ name: 'CarrierTrackingNumber' }, { name: 'Consumption', on: true, icon: 'calc' }, { name: 'LineTotal', icon: 'sum' }, { name: 'OrderQty', icon: 'sum' }] },
];

const FieldIcon = ({ kind }: { kind?: 'calc' | 'sum' }) => (
  <IconSlot>
    {kind === 'calc' && (
      <svg width="14" height="16" viewBox="0 0 14 16" fill="none" stroke={K}>
        <rect x="1.500" y=".5" width="10" height="14" fill="#fff" /><rect x="3.500" y="2.500" width="6" height="2" /><path d="M3 7.500H10M3 10H10M3 12.500H10" strokeDasharray="1.500 1" />
      </svg>
    )}
    {kind === 'sum' && <svg width="14" height="14" viewBox="0 0 14 14" fill="none" stroke={K} strokeWidth="1.100"><path d="M11.500 3V.7H2L7.500 7 2 13.200H11.500V11" /></svg>}
  </IconSlot>
);

export default function App() {
  return (
    <Page>
      <Global />
      <Canvas>
        <VisualHeader>
          <svg width="76" height="15" viewBox="0 0 76 15" fill="none" stroke="#777573">
            <path d="M2 -2 7.500 4.500V10.500H11.500V4.500L17 -2" />
            <path d="M30.500 0V9.500H43.500V0M30.500 5.500H36.500V9.500M38 4 43 -1" />
            <g fill="#777573" stroke="none"><circle cx="58.500" cy="3" r="1.300" /><circle cx="64.500" cy="3" r="1.300" /><circle cx="70.500" cy="3" r="1.300" /></g>
          </svg>
        </VisualHeader>
        <VisualFrame>
          <VisualTitle>te and Country</VisualTitle>
          <LegendRow>
            <LegendItem $w={29}>anada</LegendItem>
            <LegendItem $w={39}><Dot $c="#e66c37" />France</LegendItem>
            <LegendItem $w={50}><Dot $c="#6b007b" />Germany</LegendItem>
            <LegendItem $w={79}><Dot $c="#e044a7" />United Kingdom</LegendItem>
            <LegendItem $w={70}><Dot $c="#744ec2" />United States</LegendItem>
          </LegendRow>
          <WorldMap />
          <Handle $x={312} $y={-2} $w={12} $h={4} />
          <Handle $x={312} $y={426} $w={12} $h={4} />
          <Handle $x={742} $y={208} $w={4} $h={12} />
          <Handle $x={736} $y={-2} $w={10} $h={4} />
          <Handle $x={742} $y={-2} $w={4} $h={10} />
          <Handle $x={736} $y={426} $w={10} $h={4} />
          <Handle $x={742} $y={420} $w={4} $h={10} />
        </VisualFrame>
        <PageEdge />
      </Canvas>

      <FiltersStrip>
        <svg width="13" height="13" viewBox="0 0 13 13" fill="none" stroke={K} strokeWidth="1.200"><path d="M11.500 .8V12L6 8H1V5H6Z" /><path d="M11.500 .8V12" stroke="#a5522a" /></svg>
        <VerticalTitle>Filters</VerticalTitle>
      </FiltersStrip>

      <BuildPane>
        <PaneTitle>Build visual</PaneTitle>
        <Tabs>
          <Tab $on>
            <svg width="32" height="32" viewBox="0 0 32 32"><path d="M4 4.500H23" stroke={K} strokeWidth="1.200" /><g fill="#f2c20f" stroke={K} strokeDasharray="2 1"><rect x="4.500" y="9.500" width="23" height="7" /><rect x="4.500" y="20.500" width="23" height="7" /></g></svg>
          </Tab>
          <Tab>
            <svg width="32" height="32" viewBox="0 0 32 32" fill="none"><path d="M6.500 22V14H12.500V23M12.500 22V5.500H18.500V17M18.500 10.500H24V13" stroke="#605e5c" strokeWidth="1.600" /><path d="M27 12.500 16 21 18 24Q25 18 28 12Z" fill="#f0efed" stroke={K} strokeWidth="1.200" /><path d="M16 21Q12 21 12.500 24 12 26.500 9 27 16 29 18 24Z" fill="#fff" stroke={K} strokeWidth="1.300" /></svg>
          </Tab>
          <Tab>
            <svg width="32" height="32" viewBox="0 0 32 32" fill="none" stroke={K} strokeWidth="1.300"><circle cx="14" cy="14" r="9.500" /><path d="M4.500 15 10 10 15 13 22 7M9.500 22V17M12.500 23V15M15.500 23V17M18.500 21V14" /><path d="M20.500 20.500 28 27.500" strokeWidth="2.600" /></svg>
          </Tab>
        </Tabs>
        <TabLine viewBox="0 0 256 17" fill="none">
          <path d="M0 12.500H16L24 5 32 12.500H180" stroke="#797775" /><path d="M180 12.500H256" stroke="#b3b0ad" />
        </TabLine>
        <Gallery>
          {ICONS.map((ic, i) => (
            <Cell key={i} $on={i === 18}><svg width="24" height="24" viewBox="-3 -3 24 24">{ic}</svg></Cell>
          ))}
        </Gallery>
        <WellsArea>
          <Wells>
            <WellLabel $h={28}>Location</WellLabel>
            <WellBox $h={37}><Pill>State<PillActions /></Pill></WellBox>
            <WellLabel $h={32}>Legend</WellLabel>
            <WellBox $h={30}><Pill>Country<PillActions /></Pill></WellBox>
            <WellLabel $h={32}>Latitude</WellLabel>
            <WellBox $h={28}><Placeholder>Add data fields here</Placeholder></WellBox>
            <WellLabel $h={32}>Longitude</WellLabel>
            <WellBox $h={28}><Placeholder>Add data fields here</Placeholder></WellBox>
            <WellLabel $h={32}>Bubble size</WellLabel>
            <WellBox $h={28} />
          </Wells>
          <Scrollbar />
        </WellsArea>
      </BuildPane>

      <FieldsPane>
        <SearchBox>
          <svg width="16" height="16" viewBox="0 0 16 16" fill="none" stroke={K} strokeWidth="1.200"><circle cx="9.500" cy="5.800" r="4.600" /><path d="M6.200 9.200 .8 14.500" /></svg>
          Search
        </SearchBox>
        <Tree>
          {TABLES.map(t => (
            <React.Fragment key={t.name}>
              <TableRow><TableIcon badge={t.badge} />{t.name}</TableRow>
              {t.fields.map(f => (
                <FieldRow key={f.name}>
                  <Check $on={f.on}>{f.on && <svg width="10" height="10" viewBox="0 0 10 10" fill="none" stroke={K}><path d="M1.500 5 4 7.500 8.800 2.500" /></svg>}</Check>
                  <FieldIcon kind={f.icon} />
                  {f.name}
                </FieldRow>
              ))}
            </React.Fragment>
          ))}
        </Tree>
      </FieldsPane>

      <Overlay width="1215" height="502" viewBox="0 0 1215 502" fill="none">
        <rect x="1082.500" y="159.500" width="113" height="30" stroke="#ee1c25" strokeWidth="3" />
        <path d="M1079 201 943 325" stroke="#ee1c25" strokeWidth="5" strokeLinecap="round" />
        <path d="M931 336 939.500 317 943 324 951 329Z" fill="#ee1c25" />
      </Overlay>
    </Page>
  );
}
